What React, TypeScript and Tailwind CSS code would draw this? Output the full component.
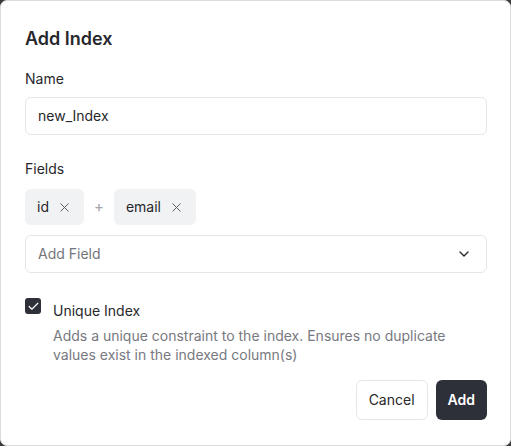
import { X, ChevronDown, Check } from 'lucide-react';

const fields = ['id', 'email'];

export default function App() {
  return (
    <div className="h-[446px] w-[511px] bg-[#3b3b3b] font-['Inter',sans-serif] text-[#27282c]">
      <div className="flex h-full flex-col rounded-[7px] border border-[#dcdcdf] bg-white py-6 pl-6 pr-[23px]">
        <div className="text-[18px] font-semibold leading-7">Add Index</div>

        <div className="mt-4 text-sm leading-5">Name</div>
        <div className="mt-2 flex h-[38px] items-center rounded-md border border-[#e6e6e9] px-3 text-sm">new_Index</div>

        <div className="mt-6 text-sm leading-5">Fields</div>
        <div className="mt-2.5 flex items-center gap-2.5">
          {fields.map((f, i) => (
            <div key={f} className="flex items-center gap-2.5">
              {i > 0 && <span className="text-[15px] text-[#a3a4aa]">+</span>}
              <div className="flex h-9 items-center gap-2 rounded-md bg-[#f1f2f4] px-3 text-sm">
                {f}
                <X size={15} strokeWidth={1.5} className="text-[#55565c]" />
              </div>
            </div>
          ))}
        </div>
        <div className="mt-2.5 flex h-[38px] items-center justify-between rounded-md border border-[#e6e6e9] px-3 text-sm text-[#74757b]">
          Add Field
          <ChevronDown size={16} strokeWidth={2} className="mr-0.5 text-[#27282c]" />
        </div>

        <div className="mt-[25px] flex gap-3">
          <div className="flex h-4 w-4 shrink-0 items-center justify-center rounded-[3px] bg-[#2d3038]">
            <Check size={13} strokeWidth={2.2} className="text-white" />
          </div>
          <div className="pt-[3px]">
            <div className="text-sm leading-5">Unique Index</div>
            <div className="mt-[5px] text-sm leading-[19px] text-[#787980]">
              Adds a unique constraint to the index. Ensures no duplicate values exist in the indexed column(s)
            </div>
          </div>
        </div>

        <div className="mt-4 flex justify-end gap-2">
          <button className="h-10 rounded-md border border-[#e6e6e9] bg-white px-3 text-sm">Cancel</button>
          <button className="h-10 rounded-md bg-[#2d3038] px-3 text-sm font-semibold text-white">Add</button>
        </div>
      </div>
    </div>
  );
}
